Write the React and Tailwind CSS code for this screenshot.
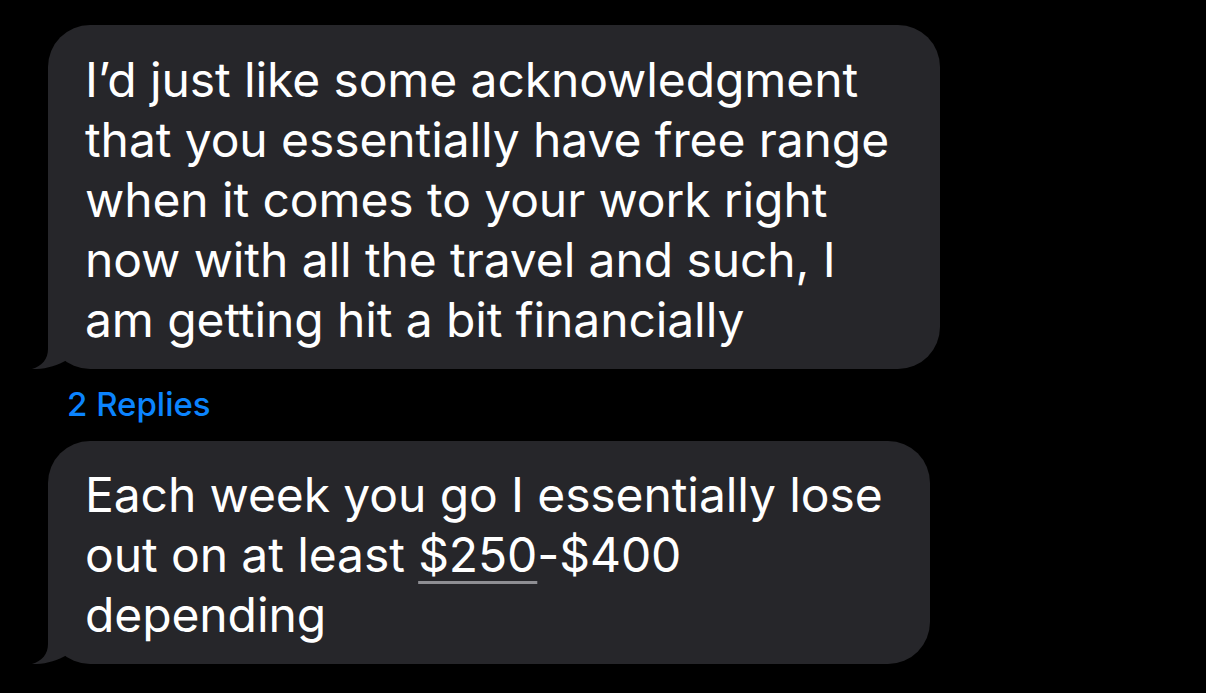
import React from "react";

function Tail() {
  return (
    <svg
      className="absolute left-[-18px] bottom-0"
      width="40"
      height="44"
      viewBox="0 0 40 44"
    >
      <path
        d="M18 0 L18 24 C18 34 12 41 2 44 C14 44.5 27 41 37 35 L37 0 Z"
        fill="#26262a"
      />
    </svg>
  );
}

function Bubble({ className, children }) {
  return (
    <div
      className={
        "relative bg-[#26262a] rounded-[42px] pl-[37px] text-white text-[48px] leading-[60px] tracking-[-0.1px] " +
        className
      }
    >
      {children}
      <Tail />
    </div>
  );
}

export default function App() {
  return (
    <div
      className="w-full h-[693px] bg-black overflow-hidden flex flex-col pl-[48px] pt-[25px]"
      style={{ fontFamily: "Inter, 'Noto Sans', sans-serif" }}
    >
      <Bubble className="w-[892px] h-[344px] pt-[25px]">
        <div>I’d just like some acknowledgment</div>
        <div>that you essentially have free range</div>
        <div>when it comes to your work right</div>
        <div>now with all the travel and such, I</div>
        <div>am getting hit a bit financially</div>
      </Bubble>
      <div className="h-[72px] flex items-center pl-[19px] text-[#0b84fe] text-[33px] font-medium">
        2 Replies
      </div>
      <Bubble className="w-[882px] h-[223px] pt-[24px]">
        <div>Each week you go I essentially lose</div>
        <div>
          out on at least{" "}
          <span className="underline decoration-[#8e8e93] decoration-[3px] underline-offset-[9px]">
            $250
          </span>
          -$400
        </div>
        <div>depending</div>
      </Bubble>
    </div>
  );
}
